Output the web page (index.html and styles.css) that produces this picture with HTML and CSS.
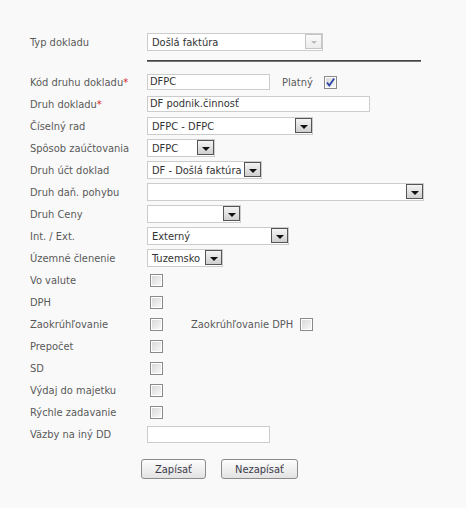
FILE: index.html
```html
<!DOCTYPE html>
<html lang="sk">
<head>
    <meta charset="UTF-8">
    <title>Typ dokladu</title>
    <link rel="stylesheet" href="styles.css">
</head>
<body>
    <form class="form">
        <div class="row">
            <label>Typ dokladu</label>
            <div class="select disabled w176"><span class="value">Došlá faktúra</span><span class="arrow"></span></div>
        </div>
        <div class="separator"></div>

        <div class="row">
            <label>Kód druhu dokladu<span class="req">*</span></label>
            <div class="inline">
                <div class="input w123">DFPC</div>
                <span class="side-label">Platný</span>
                <span class="check checked"><svg width="11" height="11" viewBox="0 0 11 11"><path d="M2 5.5 L4.3 8.5 L9.2 1.5" fill="none" stroke="#2b44a8" stroke-width="1.8"/></svg></span>
            </div>
        </div>
        <div class="row">
            <label>Druh dokladu<span class="req">*</span></label>
            <div class="input w223">DF podnik.činnosť</div>
        </div>
        <div class="row">
            <label>Číselný rad</label>
            <div class="select w166"><span class="value">DFPC - DFPC</span><span class="arrow"></span></div>
        </div>
        <div class="row">
            <label>Spôsob zaúčtovania</label>
            <div class="select w68"><span class="value">DFPC</span><span class="arrow"></span></div>
        </div>
        <div class="row">
            <label>Druh účt doklad</label>
            <div class="select w115"><span class="value">DF - Došlá faktúra</span><span class="arrow"></span></div>
        </div>
        <div class="row">
            <label>Druh daň. pohybu</label>
            <div class="select w277"><span class="value"></span><span class="arrow"></span></div>
        </div>
        <div class="row">
            <label>Druh Ceny</label>
            <div class="select w94"><span class="value"></span><span class="arrow"></span></div>
        </div>
        <div class="row">
            <label>Int. / Ext.</label>
            <div class="select w142"><span class="value">Externý</span><span class="arrow"></span></div>
        </div>
        <div class="row">
            <label>Územné členenie</label>
            <div class="select w76"><span class="value">Tuzemsko</span><span class="arrow"></span></div>
        </div>
        <div class="row">
            <label>Vo valute</label>
            <span class="check"></span>
        </div>
        <div class="row">
            <label>DPH</label>
            <span class="check"></span>
        </div>
        <div class="row">
            <label>Zaokrúhľovanie</label>
            <div class="inline">
                <span class="check"></span>
                <span class="side-label wide">Zaokrúhľovanie DPH</span>
                <span class="check"></span>
            </div>
        </div>
        <div class="row">
            <label>Prepočet</label>
            <span class="check"></span>
        </div>
        <div class="row">
            <label>SD</label>
            <span class="check"></span>
        </div>
        <div class="row">
            <label>Výdaj do majetku</label>
            <span class="check"></span>
        </div>
        <div class="row">
            <label>Rýchle zadavanie</label>
            <span class="check"></span>
        </div>
        <div class="row">
            <label>Väzby na iný DD</label>
            <div class="input w123 tall"></div>
        </div>

        <div class="buttons">
            <button type="button" class="btn w65">Zapísať</button>
            <button type="button" class="btn w77">Nezapísať</button>
        </div>
    </form>
</body>
</html>
```

FILE: styles.css
```css
body {
    margin: 0;
    background-color: #f9f9f9;
    font-family: Tahoma, 'DejaVu Sans Condensed', 'DejaVu Sans', sans-serif;
    font-size: 11px;
    color: #595959;
}
.form {
    padding: 31px 0 0 30px;
}
.row {
    display: grid;
    grid-template-columns: 117px auto;
    align-items: center;
    height: 22px;
}
.row label {
    white-space: nowrap;
}
.req {
    color: #d21f1f;
}
.separator {
    width: 274px;
    height: 1px;
    background-color: #444;
    margin: 7px 0 9px 117px;
    border-bottom: 1px solid #777;
}
.inline {
    display: flex;
    align-items: center;
}

/* inputs */
.input {
    box-sizing: border-box;
    height: 16px;
    line-height: 14px;
    border: 1px solid #ccc;
    background-color: #fff;
    color: #333;
    padding: 0 2px;
    white-space: nowrap;
}
.input.tall {
    height: 17px;
}

/* selects */
.select {
    box-sizing: border-box;
    display: flex;
    justify-content: space-between;
    align-items: flex-end;
    height: 18px;
    border: 1px solid #ccc;
    background-color: #fff;
    color: #333;
    padding: 0 0 1px 4px;
}
.select .value {
    align-self: center;
    white-space: nowrap;
    padding-top: 1px;
}
.select .arrow {
    position: relative;
    box-sizing: border-box;
    flex: none;
    width: 17px;
    height: 15px;
    border: 1px solid #555;
    background: linear-gradient(#f4f4f4, #cfcfcf);
    margin-left: 2px;
}
.select .arrow::after {
    content: '';
    position: absolute;
    left: 4px;
    top: 6px;
    border-left: 4px solid transparent;
    border-right: 4px solid transparent;
    border-top: 4px solid #111;
}
.select.disabled .arrow {
    border-color: #c4c4c4;
    background: linear-gradient(#fbfbfb, #ececec);
}
.select.disabled .arrow::after {
    border-top-color: #bbb;
    border-left-width: 3px;
    border-right-width: 3px;
    border-top-width: 3px;
    left: 5px;
}

.w68 { width: 68px; }
.w76 { width: 76px; }
.w94 { width: 94px; }
.w115 { width: 115px; }
.w123 { width: 123px; }
.w142 { width: 142px; }
.w166 { width: 166px; }
.w176 { width: 176px; }
.w223 { width: 223px; }
.w277 { width: 277px; }
.w65 { width: 65px; }
.w77 { width: 77px; }

/* checkboxes */
.check {
    box-sizing: border-box;
    display: inline-flex;
    align-items: center;
    justify-content: center;
    width: 13px;
    height: 13px;
    margin-left: 3px;
    border: 1px solid #8a8a8a;
    box-shadow: inset 0 0 0 1px #fff;
    background: linear-gradient(135deg, #d6d6d6, #fafafa);
}
.check.checked {
    margin-left: 0;
}
.side-label {
    margin: 0 11px 0 12px;
}
.side-label.wide {
    margin: 0 4px 0 28px;
}

/* buttons */
.buttons {
    display: flex;
    gap: 15px;
    margin: 14px 0 0 111px;
}
.btn {
    height: 20px;
    padding: 0;
    border: 1px solid #8b8b8b;
    border-radius: 3px;
    background: linear-gradient(#fdfdfd, #e2e2e2);
    font-family: inherit;
    font-size: 11px;
    color: #3a3a4a;
}
```
